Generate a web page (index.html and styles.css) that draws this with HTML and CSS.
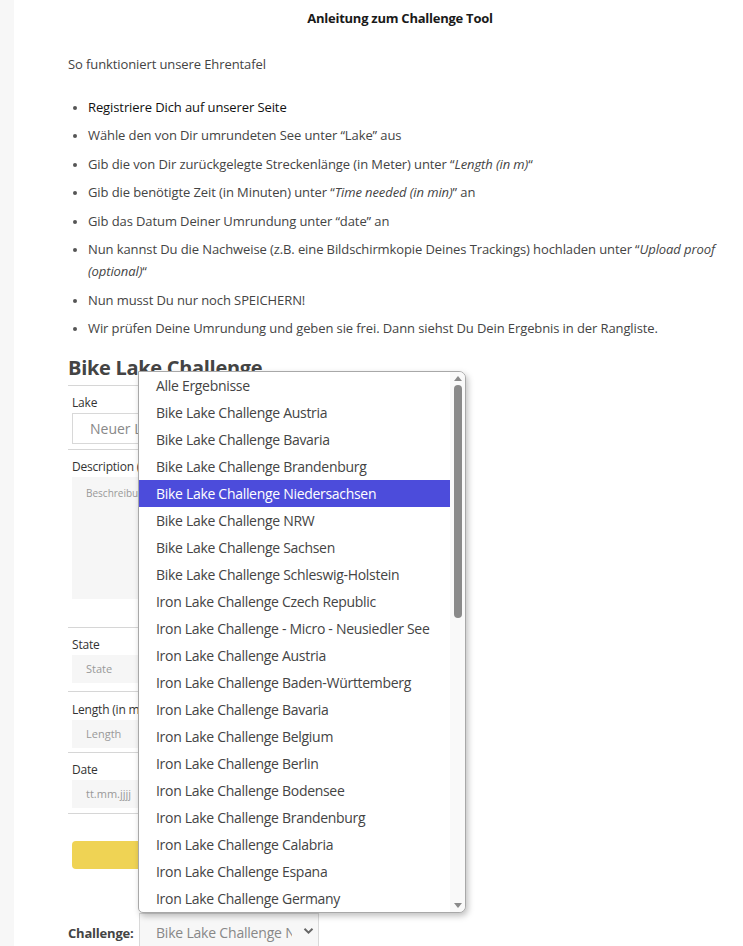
FILE: index.html
```html
<!DOCTYPE html>
<html lang="de">
<head>
<meta charset="utf-8">
<title>Anleitung zum Challenge Tool</title>
<link rel="stylesheet" href="styles.css">
</head>
<body>
<div class="page">
  <div class="content">
    <h1 class="title">Anleitung zum Challenge Tool</h1>
    <p class="intro">So funktioniert unsere Ehrentafel</p>
    <ul class="steps">
      <li class="dark">Registriere Dich auf unserer Seite</li>
      <li>Wähle den von Dir umrundeten See unter “Lake” aus</li>
      <li>Gib die von Dir zurückgelegte Streckenlänge (in Meter) unter “<em>Length (in m)</em>“</li>
      <li>Gib die benötigte Zeit (in Minuten) unter “<em>Time needed (in min)</em>” an</li>
      <li>Gib das Datum Deiner Umrundung unter “date” an</li>
      <li>Nun kannst Du die Nachweise (z.B. eine Bildschirmkopie Deines Trackings) hochladen unter “<em>Upload proof (optional)</em>“</li>
      <li>Nun musst Du nur noch SPEICHERN!</li>
      <li>Wir prüfen Deine Umrundung und geben sie frei. Dann siehst Du Dein Ergebnis in der Rangliste.</li>
    </ul>

    <div class="form">
      <h2 class="form-title">Bike Lake Challenge</h2>
      <div class="field field-lake">
        <div class="label">Lake</div>
        <div class="input bordered">Neuer Lake</div>
      </div>
      <div class="field field-desc">
        <div class="label">Description (optional)</div>
        <div class="textarea">Beschreibung</div>
      </div>
      <div class="field field-state">
        <div class="label">State</div>
        <div class="input filled">State</div>
      </div>
      <div class="field field-length">
        <div class="label">Length (in m)</div>
        <div class="input filled">Length</div>
      </div>
      <div class="field field-date">
        <div class="label">Date</div>
        <div class="input filled">tt.mm.jjjj</div>
      </div>
      <div class="button">Speichern</div>
    </div>

    <div class="challenge-row">
      <span class="challenge-label">Challenge:</span>
      <div class="select">
        <span class="select-text">Bike Lake Challenge Niedersachsen</span>
        <svg class="chevron" width="11" height="8" viewBox="0 0 11 8"><path d="M1.5 1.8 L5.5 5.6 L9.5 1.8" fill="none" stroke="#666" stroke-width="2"/></svg>
      </div>
    </div>
  </div>

  <div class="dropdown">
    <ul class="options">
      <li>Alle Ergebnisse</li>
      <li>Bike Lake Challenge Austria</li>
      <li>Bike Lake Challenge Bavaria</li>
      <li>Bike Lake Challenge Brandenburg</li>
      <li class="selected">Bike Lake Challenge Niedersachsen</li>
      <li>Bike Lake Challenge NRW</li>
      <li>Bike Lake Challenge Sachsen</li>
      <li>Bike Lake Challenge Schleswig-Holstein</li>
      <li>Iron Lake Challenge Czech Republic</li>
      <li>Iron Lake Challenge - Micro - Neusiedler See</li>
      <li>Iron Lake Challenge Austria</li>
      <li>Iron Lake Challenge Baden-Württemberg</li>
      <li>Iron Lake Challenge Bavaria</li>
      <li>Iron Lake Challenge Belgium</li>
      <li>Iron Lake Challenge Berlin</li>
      <li>Iron Lake Challenge Bodensee</li>
      <li>Iron Lake Challenge Brandenburg</li>
      <li>Iron Lake Challenge Calabria</li>
      <li>Iron Lake Challenge Espana</li>
      <li>Iron Lake Challenge Germany</li>
    </ul>
    <div class="scrollbar">
      <svg class="arrow" width="10" height="8" viewBox="0 0 10 8"><path d="M1 7 L5 2 L9 7 Z" fill="#8a8a8a"/></svg>
      <div class="track"><div class="thumb"></div></div>
      <svg class="arrow" width="10" height="8" viewBox="0 0 10 8"><path d="M1 1 L5 6 L9 1 Z" fill="#8a8a8a"/></svg>
    </div>
  </div>
</div>
</body>
</html>
```

FILE: styles.css
```css
html, body {
  margin: 0;
  padding: 0;
}
body {
  background: #f7f7f7;
  font-family: "Open Sans", "Noto Sans", sans-serif;
  color: #444;
  overflow: hidden;
  height: 946px;
}
.page {
  position: relative;
  margin-left: 14px;
  background: #fff;
  min-height: 946px;
}
.content {
  padding: 8px 0 0 54px;
}
.title {
  margin: 0;
  font-size: 13px;
  font-weight: 700;
  line-height: 20px;
  color: #1a1a1a;
  text-align: center;
  width: 664px;
  letter-spacing: -0.25px;
}
.intro {
  margin: 25px 0 0;
  font-size: 13px;
  line-height: 22px;
  letter-spacing: -0.1px;
}
.steps {
  margin: 21px 0 0;
  padding: 0 0 0 20px;
  font-size: 13px;
  line-height: 22.4px;
  letter-spacing: -0.1px;
  width: 652px;
}
.steps li {
  margin-bottom: 6px;
}
.steps li::marker {
  font-size: 12px;
  color: #555;
}
.steps li.dark {
  color: #111;
}
.steps em {
  font-style: italic;
}
.form {
  width: 340px;
  margin-top: 15px;
}
.form-title {
  margin: 0;
  font-size: 20px;
  font-weight: 700;
  line-height: 26px;
  letter-spacing: -0.3px;
  color: #444;
  padding-bottom: 4px;
  border-bottom: 1px solid #d6d6d6;
}
.field {
  padding: 8px 4px 5px;
  border-bottom: 1px solid #d6d6d6;
}
.field-desc {
  padding-bottom: 28px;
}
.field-state {
  padding-bottom: 8px;
}
.field-length {
  padding-top: 9px;
  padding-bottom: 4px;
}
.label {
  font-size: 12px;
  line-height: 18px;
  color: #333;
  letter-spacing: -0.2px;
}
.input {
  margin-top: 1px;
  height: 28px;
  line-height: 28px;
  padding-left: 14px;
  font-size: 11px;
  color: #999;
  background: #f6f6f6;
}
.input.bordered {
  background: #fff;
  border: 1px solid #d8d8d8;
  height: 29px;
  line-height: 29px;
  padding-left: 17px;
  font-size: 14px;
  color: #888;
}
.textarea {
  margin-top: 1px;
  height: 122px;
  background: #f6f6f6;
  font-size: 10px;
  color: #999;
  padding: 9px 0 0 14px;
  box-sizing: border-box;
}
.button {
  margin: 27px 0 0 4px;
  width: 330px;
  height: 28px;
  border-radius: 4px;
  background: #efd354;
  color: #fff;
  font-size: 13px;
  line-height: 28px;
  text-align: center;
}
.challenge-row {
  display: flex;
  align-items: center;
  margin-top: 44px;
}
.challenge-label {
  font-size: 13px;
  font-weight: 700;
  color: #444;
  line-height: 20px;
  width: 71px;
  letter-spacing: -0.2px;
}
.select {
  width: 180px;
  height: 40px;
  box-sizing: border-box;
  border: 1px solid #d9d9d9;
  background: #f7f7f7;
  display: flex;
  align-items: center;
  padding: 0 4px 0 16px;
  overflow: hidden;
}
.select-text {
  flex: 1;
  white-space: nowrap;
  overflow: hidden;
  font-size: 14px;
  color: #888;
  letter-spacing: -0.2px;
}
.chevron {
  flex: none;
  margin-left: 11px;
  margin-top: -3px;
}
.dropdown {
  position: absolute;
  left: 124px;
  top: 371px;
  width: 328px;
  height: 542px;
  box-sizing: border-box;
  background: #fff;
  border: 1px solid #a8a8a8;
  border-radius: 0 7px 7px 5px;
  box-shadow: 2px 3px 6px rgba(0, 0, 0, 0.25);
  display: flex;
  overflow: hidden;
}
.options {
  list-style: none;
  margin: 0;
  padding: 0;
  flex: 1;
}
.options li {
  height: 27px;
  line-height: 27px;
  padding-left: 17px;
  font-size: 14px;
  color: #444;
  white-space: nowrap;
  letter-spacing: -0.3px;
}
.options li.selected {
  background: #4c4cdb;
  color: #fff;
}
.scrollbar {
  width: 15px;
  flex: none;
  background: #f9f9f9;
  display: flex;
  flex-direction: column;
  align-items: center;
}
.arrow {
  flex: none;
  margin: 2px 0;
}
.track {
  flex: 1;
  width: 100%;
  display: flex;
  justify-content: center;
  padding-top: 1px;
}
.thumb {
  width: 8px;
  height: 233px;
  border-radius: 4px;
  background: #8a8a8a;
}
```
